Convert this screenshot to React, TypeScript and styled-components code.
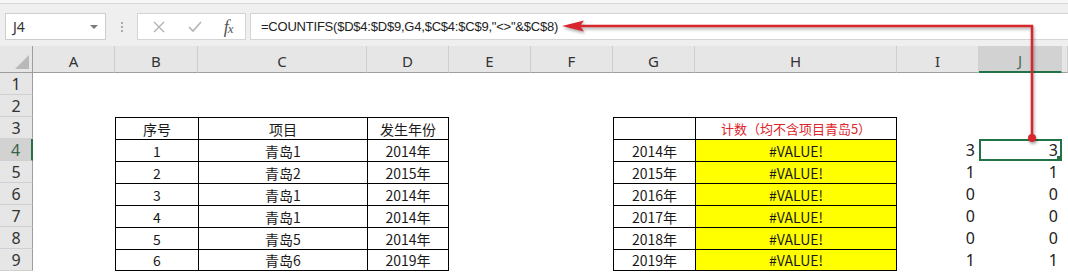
import * as React from 'react';
import styled, { createGlobalStyle } from 'styled-components';

const GlobalStyle = createGlobalStyle`
  html, body {
    margin: 0;
    padding: 0;
    background: #fff;
  }
  body {
    font-family: "Noto Sans", "Noto Sans CJK SC", sans-serif;
    overflow: hidden;
  }
`;

const COLS = [33, 82, 83, 169, 82, 82, 82, 82, 202, 82, 83, 6];
const LETTERS = ['A', 'B', 'C', 'D', 'E', 'F', 'G', 'H', 'I', 'J', ''];

const Page = styled.div`
  position: relative;
  width: 1068px;
  height: 276px;
  overflow: hidden;
  background: #fff;
`;

const RibbonEdge = styled.div`
  height: 3px;
  background: #f7f7f7;
  border-bottom: 1px solid #d8d8d8;
`;

const FormulaBar = styled.div`
  display: flex;
  align-items: flex-start;
  height: 42px;
  padding: 9px 0 0 5px;
  box-sizing: border-box;
  background: #efefef;
`;

const NameBox = styled.div`
  position: relative;
  display: flex;
  align-items: center;
  width: 101px;
  height: 27px;
  padding-left: 7px;
  box-sizing: border-box;
  background: #fff;
  border: 1px solid #cdcdcd;
  font-size: 14px;
  color: #333;
`;

const DropCaret = styled.span`
  margin-left: auto;
  margin-right: 7px;
  width: 0;
  height: 0;
  border-left: 4px solid transparent;
  border-right: 4px solid transparent;
  border-top: 4px solid #7a7a7a;
`;

const Grip = styled.div`
  display: flex;
  flex-direction: column;
  align-items: center;
  justify-content: center;
  gap: 2px;
  width: 31px;
  height: 27px;
`;

const GripDot = styled.span`
  width: 2px;
  height: 2px;
  background: #a8a8a8;
`;

const ButtonBox = styled.div`
  display: flex;
  align-items: center;
  justify-content: space-around;
  width: 109px;
  height: 27px;
  box-sizing: border-box;
  padding: 0 2px 0 4px;
  background: #fff;
  border: 1px solid #d4d4d4;
`;

const FxLabel = styled.span`
  font-family: "Liberation Serif", serif;
  font-style: italic;
  font-size: 18px;
  line-height: 1;
  color: #555;
  letter-spacing: -1px;

  small {
    font-size: 13px;
  }
`;

const FormulaInput = styled.div`
  flex: 1;
  display: flex;
  align-items: center;
  height: 27px;
  margin-left: 4px;
  padding-left: 10px;
  box-sizing: border-box;
  background: #fff;
  border: 1px solid #d4d4d4;
  border-right: none;
  font-family: "Liberation Sans", Arial, sans-serif;
  font-size: 13px;
  letter-spacing: -0.22px;
  color: #222;
  white-space: nowrap;
`;

const Sheet = styled.div`
  display: grid;
  grid-template-columns: ${COLS.map((w) => `${w}px`).join(' ')};
  grid-template-rows: 27px repeat(9, 22px);
  background: #fff;
`;

const CornerCell = styled.div`
  position: relative;
  background: #e6e6e6;
  border-right: 1px solid #9e9e9e;
  border-bottom: 1px solid #9e9e9e;
  box-sizing: border-box;

  &::after {
    content: '';
    position: absolute;
    right: 3px;
    bottom: 3px;
    border-left: 14px solid transparent;
    border-bottom: 14px solid #b9b9b9;
  }
`;

const ColHeader = styled.div<{ $selected?: boolean }>`
  display: flex;
  align-items: center;
  justify-content: center;
  padding-top: 4px;
  box-sizing: border-box;
  background: ${(p) => (p.$selected ? '#d2d2d2' : '#e6e6e6')};
  border-right: 1px solid #cfcfcf;
  border-bottom: ${(p) => (p.$selected ? '2px solid #217346' : '1px solid #9e9e9e')};
  font-size: 15px;
  line-height: 1;
  color: ${(p) => (p.$selected ? '#4a6b58' : '#333')};
`;

const RowHeader = styled.div<{ $selected?: boolean }>`
  display: flex;
  align-items: center;
  justify-content: center;
  box-sizing: border-box;
  background: ${(p) => (p.$selected ? '#d2d2d2' : '#e6e6e6')};
  border-bottom: 1px solid #d0d0d0;
  border-right: ${(p) => (p.$selected ? '2px solid #217346' : '1px solid #9e9e9e')};
  font-size: 16px;
  line-height: 1;
  color: ${(p) => (p.$selected ? '#3c5f4b' : '#333')};
`;

type CellProps = {
  $align?: 'left' | 'center' | 'right';
  $fill?: string;
  $ink?: string;
  $size?: number;
  $latin?: boolean;
  $top?: boolean;
  $left?: boolean;
  $right?: boolean;
  $bottom?: boolean;
  $active?: boolean;
};

const Cell = styled.div<CellProps>`
  position: relative;
  display: flex;
  align-items: center;
  justify-content: ${(p) =>
    p.$align === 'right' ? 'flex-end' : p.$align === 'left' ? 'flex-start' : 'center'};
  padding: 0 4px;
  box-sizing: border-box;
  overflow: hidden;
  background: ${(p) => p.$fill || '#fff'};
  color: ${(p) => p.$ink || '#1a1a1a'};
  font-family: ${(p) =>
    p.$latin ? '"Noto Sans", sans-serif' : '"Noto Sans CJK SC", "Noto Sans", sans-serif'};
  font-size: ${(p) => p.$size || 14}px;
  line-height: 1;
  white-space: nowrap;
  border-top: ${(p) => (p.$top ? '1px solid #000' : 'none')};
  border-left: ${(p) => (p.$left ? '1px solid #000' : 'none')};
  border-right: ${(p) => (p.$right ? '1px solid #000' : 'none')};
  border-bottom: ${(p) => (p.$bottom ? '1px solid #000' : 'none')};
  box-shadow: ${(p) => (p.$active ? 'inset 0 0 0 2px #217346' : 'none')};
`;

const FillHandle = styled.span`
  position: absolute;
  right: 0;
  bottom: 0;
  width: 5px;
  height: 5px;
  background: #217346;
`;

const ArrowLayer = styled.svg`
  position: absolute;
  left: 0;
  top: 0;
  pointer-events: none;
  filter: drop-shadow(1px 2px 1.5px rgba(0, 0, 0, 0.35));
`;

const projects = [
  ['1', '青岛1', '2014年'],
  ['2', '青岛2', '2015年'],
  ['3', '青岛1', '2014年'],
  ['4', '青岛1', '2014年'],
  ['5', '青岛5', '2014年'],
  ['6', '青岛6', '2019年'],
];

const years = ['2014年', '2015年', '2016年', '2017年', '2018年', '2019年'];
const counts = ['3', '1', '0', '0', '0', '1'];

// one row of the sheet: returns the cells for columns A..K
const renderRow = (row: number) => {
  const cells: React.ReactNode[] = [];
  const dataIdx = row - 4;
  const isHead = row === 3;
  const inTable = row >= 3 && row <= 9;
  const last = row === 9;

  for (let c = 1; c <= 11; c++) {
    const key = `${row}-${c}`;
    if (inTable && c >= 2 && c <= 4) {
      let text = '';
      if (isHead) text = ['序号', '项目', '发生年份'][c - 2];
      else text = projects[dataIdx][c - 2];
      cells.push(
        <Cell key={key} $top $left $right={c === 4} $bottom={last}>
          {text}
        </Cell>
      );
    } else if (inTable && c === 7) {
      cells.push(
        <Cell key={key} $top $left $bottom={last}>
          {isHead ? '' : years[dataIdx]}
        </Cell>
      );
    } else if (inTable && c === 8) {
      cells.push(
        isHead ? (
          <Cell key={key} $top $left $right $ink="#e0242b" $size={13}>
            计数（均不含项目青岛5）
          </Cell>
        ) : (
          <Cell key={key} $top $left $right $bottom={last} $fill="#ffff00">
            #VALUE!
          </Cell>
        )
      );
    } else if (row >= 4 && row <= 9 && (c === 9 || c === 10)) {
      const active = c === 10 && row === 4;
      cells.push(
        <Cell key={key} $align="right" $size={16} $latin $ink="#222" $active={active}>
          {counts[dataIdx]}
          {active && <FillHandle />}
        </Cell>
      );
    } else {
      cells.push(<Cell key={key} />);
    }
  }
  return cells;
};

export default function App() {
  const rows = [1, 2, 3, 4, 5, 6, 7, 8, 9];

  return (
    <Page>
      <GlobalStyle />
      <RibbonEdge />
      <FormulaBar>
        <NameBox>
          J4
          <DropCaret />
        </NameBox>
        <Grip>
          <GripDot />
          <GripDot />
          <GripDot />
        </Grip>
        <ButtonBox>
          <svg width="14" height="14" viewBox="0 0 14 14">
            <path d="M2 2 L12 12 M12 2 L2 12" stroke="#b3b3b3" strokeWidth="1.4" fill="none" />
          </svg>
          <svg width="16" height="14" viewBox="0 0 16 14">
            <path d="M2 7 L6 11 L14 2" stroke="#b3b3b3" strokeWidth="1.6" fill="none" />
          </svg>
          <FxLabel>
            f<small>x</small>
          </FxLabel>
        </ButtonBox>
        <FormulaInput>=COUNTIFS($D$4:$D$9,G4,$C$4:$C$9,"&lt;&gt;"&amp;$C$8)</FormulaInput>
      </FormulaBar>

      <Sheet>
        <CornerCell />
        {LETTERS.map((l) => (
          <ColHeader key={l || 'k'} $selected={l === 'J'}>
            {l}
          </ColHeader>
        ))}
        {rows.map((r) => (
          <React.Fragment key={r}>
            <RowHeader $selected={r === 4}>{r}</RowHeader>
            {renderRow(r)}
          </React.Fragment>
        ))}
      </Sheet>

      <ArrowLayer width="1068" height="276" viewBox="0 0 1068 276">
        <path
          d="M578 26 H1032 V137"
          stroke="#d9262d"
          strokeWidth="2.5"
          fill="none"
        />
        <polygon points="562,26 584,20.5 580,26 584,31.5" fill="#d9262d" />
        <circle cx="1032" cy="138" r="4" fill="#d9262d" />
      </ArrowLayer>
    </Page>
  );
}
